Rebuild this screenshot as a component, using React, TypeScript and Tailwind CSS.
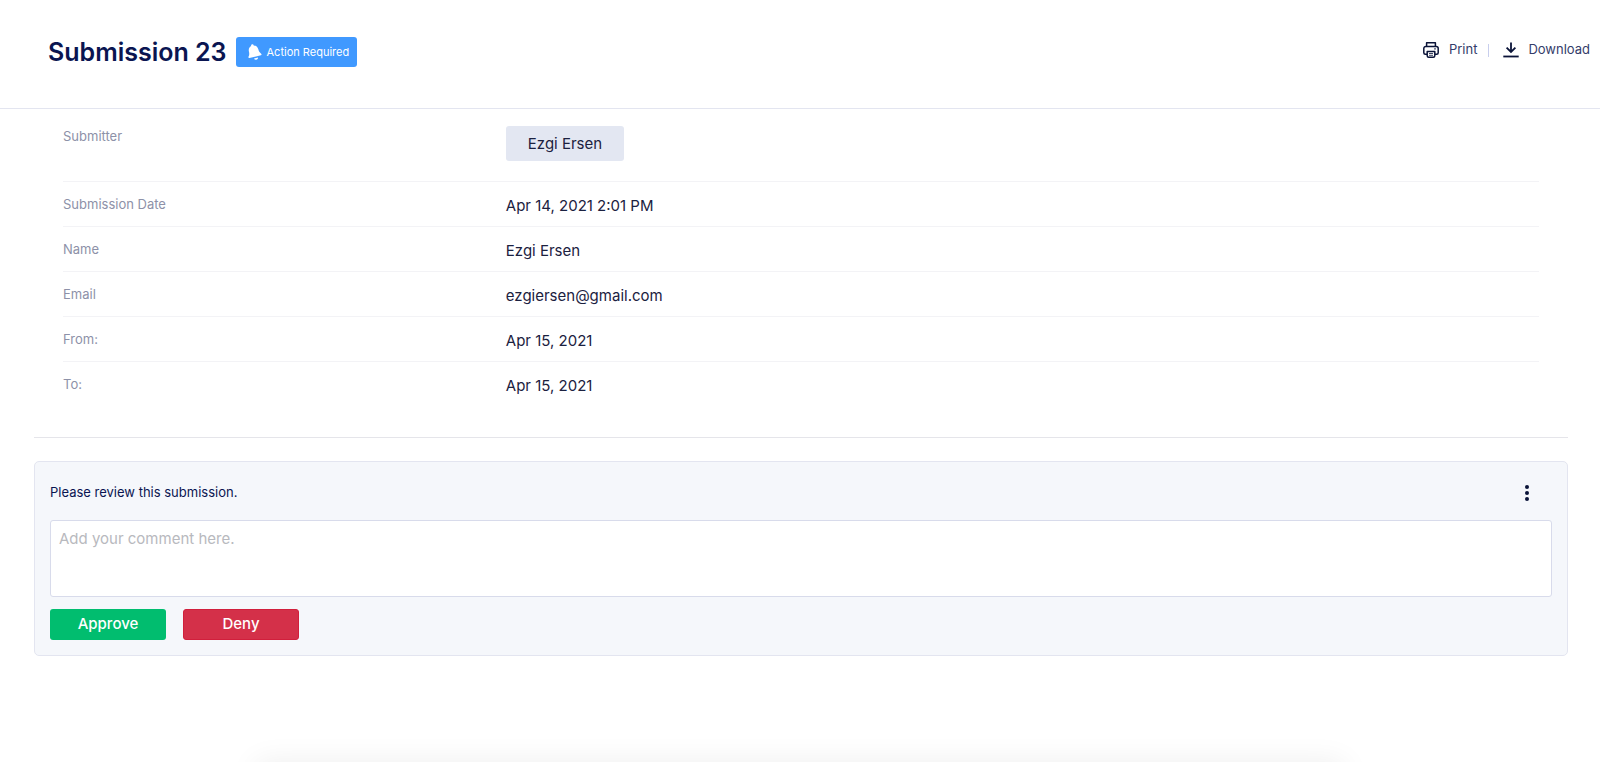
import { useState } from 'react';

interface Field {
  label: string;
  value: string;
}

const fields: Field[] = [
  { label: 'Submission Date', value: 'Apr 14, 2021 2:01 PM' },
  { label: 'Name', value: 'Ezgi Ersen' },
  { label: 'Email', value: 'ezgiersen@gmail.com' },
  { label: 'From:', value: 'Apr 15, 2021' },
  { label: 'To:', value: 'Apr 15, 2021' },
];

function BellIcon() {
  return (
    <svg viewBox="0 0 16 16" className="size-4" fill="currentColor" aria-hidden="true">
      <g transform="rotate(-14 8 8)">
        <path d="M8 0a1.3 1.3 0 0 0-1.3 1.3v.3C4.5 2.2 3.2 4 3.2 6.2c0 2.8-.7 4-1.7 5.1-.5.6-.2 1.5.6 1.5h11.8c.8 0 1.100-.9.6-1.500-1-1.100-1.700-2.300-1.700-5.100 0-2.200-1.300-4-3.500-4.600v-.3A1.300 1.300 0 0 0 8 0z" />
        <path d="M6.5 14.2h4a2 1.9 0 0 1-4 0z" />
      </g>
    </svg>
  );
}

function PrintIcon() {
  return (
    <svg viewBox="0 0 16 16" className="size-4" fill="none" stroke="currentColor" strokeWidth="1.5" strokeLinejoin="round" aria-hidden="true">
      <path d="M3.6 4.5V.8h8.800v3.700" />
      <path d="M4 12.2H2.300A1.500 1.500 0 0 1 .8 10.700V6.500a2 2 0 0 1 2-2h10.400a2 2 0 0 1 2 2v4.200a1.500 1.500 0 0 1-1.500 1.500H12" />
      <path d="M4.2 9.5h7.600v4.200a1.500 1.500 0 0 1-1.500 1.500H5.700a1.500 1.500 0 0 1-1.500-1.500z" />
      <path d="M11.3 6.9h1.4" strokeWidth="1.2" />
      <path d="M6 11.5h4M6 13.3h4" strokeWidth="0.8" />
    </svg>
  );
}

function DownloadIcon() {
  return (
    <svg viewBox="0 0 16 16" className="size-4" fill="none" stroke="currentColor" strokeWidth="1.8" aria-hidden="true">
      <path d="M8 0.5v9.3" />
      <path d="M3.6 5.7 8 10l4.4-4.3" />
      <path d="M0.3 14.5h15.4" />
    </svg>
  );
}

export default function App() {
  const [comment, setComment] = useState('');

  return (
    <div className="bg-white font-['Inter',sans-serif] text-[#0a1551]">
      <header className="flex items-start justify-between border-b border-[#e3e5f0] pt-[37px] pr-[10px] pb-[41px] pl-12">
        <div className="flex items-center gap-[9px]">
          <h1 className="text-[25px] leading-[30px] font-semibold">Submission 23</h1>
          <span className="flex h-[30px] items-center gap-[5px] rounded-[3px] bg-[#4099ff] pr-2 pl-[10px] text-[11px] text-white">
            <BellIcon />
            Action Required
          </span>
        </div>
        <div className="flex h-[26px] items-center text-[13px] text-[#343c6a]">
          <button type="button" className="flex items-center gap-[10px]">
            <span className="text-[#0a1338]"><PrintIcon /></span>
            Print
          </button>
          <span className="mr-[14px] ml-[11px] h-[13px] w-px bg-[#c8ceed]" />
          <button type="button" className="flex items-center gap-[9px]">
            <span className="text-[#0a1338]"><DownloadIcon /></span>
            Download
          </button>
        </div>
      </header>

      <main className="pr-8 pl-[34px]">
        <dl className="mx-[29px] pb-[31px] text-[15px] leading-6 text-[#1b2140]">
          <div className="flex border-b border-[#f3f3f6] pt-[17px] pb-5">
            <dt className="w-[30%] text-[13px] leading-5 text-[#8d91a8]">Submitter</dt>
            <dd className="flex h-[35px] items-center rounded-[3px] bg-[#e3e7f2] px-[22px]">Ezgi Ersen</dd>
          </div>
          {fields.map((field) => (
            <div key={field.label} className="flex border-b border-[#f3f3f6] pt-3 pb-2 last:border-b-0">
              <dt className="w-[30%] text-[13px] leading-5 text-[#8d91a8]">{field.label}</dt>
              <dd>{field.value}</dd>
            </div>
          ))}
        </dl>

        <section className="border-t border-[#e5e5ea] pt-[23px]">
          <div className="rounded-[5px] border border-[#e3e5f0] bg-[#f5f7fb] p-[15px]">
            <div className="flex items-center justify-between pt-1 pr-[19px] pb-[15px]">
              <label htmlFor="comment" className="text-[13px]">Please review this submission.</label>
              <button type="button" aria-label="More options" className="flex h-6 w-3 items-center justify-center text-[#0a1338]">
                <svg viewBox="0 0 4 16" className="h-4 w-1" fill="currentColor" aria-hidden="true">
                  <circle cx="2" cy="2" r="2" />
                  <circle cx="2" cy="8" r="2" />
                  <circle cx="2" cy="14" r="2" />
                </svg>
              </button>
            </div>
            <textarea
              id="comment"
              value={comment}
              onChange={(e) => setComment(e.target.value)}
              placeholder="Add your comment here."
              className="block h-[77px] w-full resize-none rounded-[3px] border border-[#d8dbeb] bg-white px-2 py-[7px] text-[15px] leading-[22px] placeholder:text-[#b8b9be]"
            />
            <div className="mt-3 flex gap-[17px] text-[15px] font-medium text-white">
              <button type="button" className="h-[31px] w-[116px] rounded-[3px] bg-[#01bd6f]">Approve</button>
              <button type="button" className="h-[31px] w-[116px] rounded-[3px] border border-[#d11f3c] bg-[#d43049]">Deny</button>
            </div>
          </div>
        </section>
      </main>

      {/* Top shadow of the docked panel under the fold */}
      <div className="pointer-events-none fixed top-full right-[16%] left-[16%] h-10 shadow-[0_0_30px_rgba(0,0,0,0.07)]" />
    </div>
  );
}
